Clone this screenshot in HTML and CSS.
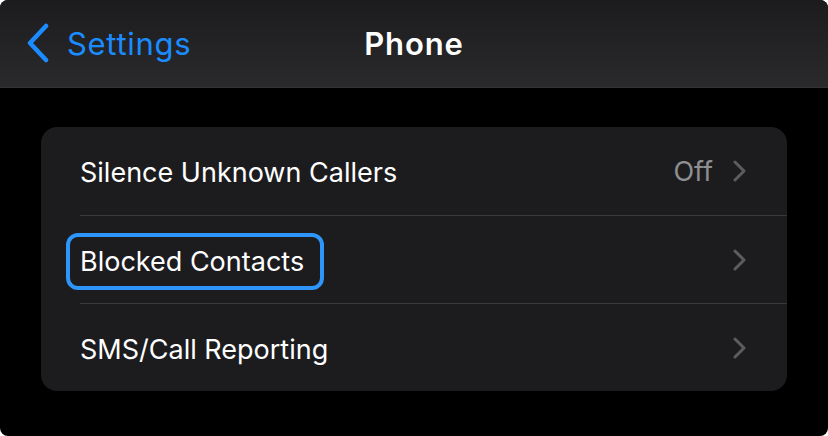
FILE: index.html
```html
<!DOCTYPE html>
<html lang="en">
<head>
<meta charset="UTF-8" />
<title>Phone</title>
<link rel="stylesheet" href="styles.css">
</head>
<body>
<div class="screen">
  <header class="nav-bar">
    <a class="back" href="#">
      <svg class="back-icon" width="24" height="40" viewBox="0 0 24 40">
        <path d="M20 3 L4 20 L20 37" fill="none" stroke="#1a8cff" stroke-width="4.5" stroke-linecap="round" stroke-linejoin="round"/>
      </svg>
      <span>Settings</span>
    </a>
    <h1 class="title">Phone</h1>
  </header>

  <section class="group">
    <div class="row">
      <div class="row-body">
        <span class="label">Silence Unknown Callers</span>
        <span class="detail">
          <span class="value">Off</span>
          <svg class="chevron" width="14" height="22" viewBox="0 0 14 22"><path d="M2 2 L11 11 L2 20" fill="none" stroke="#5c5c60" stroke-width="3" stroke-linecap="round" stroke-linejoin="round"/></svg>
        </span>
      </div>
    </div>
    <div class="row">
      <div class="row-body">
        <span class="label focused">Blocked Contacts</span>
        <span class="detail">
          <svg class="chevron" width="14" height="22" viewBox="0 0 14 22"><path d="M2 2 L11 11 L2 20" fill="none" stroke="#5c5c60" stroke-width="3" stroke-linecap="round" stroke-linejoin="round"/></svg>
        </span>
      </div>
    </div>
    <div class="row">
      <div class="row-body">
        <span class="label">SMS/Call Reporting</span>
        <span class="detail">
          <svg class="chevron" width="14" height="22" viewBox="0 0 14 22"><path d="M2 2 L11 11 L2 20" fill="none" stroke="#5c5c60" stroke-width="3" stroke-linecap="round" stroke-linejoin="round"/></svg>
        </span>
      </div>
    </div>
  </section>
</div>
</body>
</html>
```

FILE: styles.css
```css
body {
  margin: 0;
  background: #fff;
  font-family: Inter, "Noto Sans", sans-serif;
}
.screen {
  width: 828px;
  height: 436px;
  background: #000;
  border-radius: 8px;
  overflow: hidden;
}
.nav-bar {
  height: 88px;
  box-sizing: border-box;
  background: linear-gradient(#1c1c1e, #2a2a2c);
  border-bottom: 1px solid #333336;
  display: grid;
  grid-template-columns: 1fr auto 1fr;
  align-items: center;
}
.back {
  display: flex;
  align-items: center;
  gap: 17px;
  padding-left: 26px;
  color: #1a8cff;
  text-decoration: none;
  font-size: 31px;
  letter-spacing: 0.7px;
  margin-top: -1px;
}
.title {
  margin: 0;
  color: #fff;
  font-size: 31px;
  font-weight: 600;
  letter-spacing: 0.9px;
  margin-top: -1px;
}
.group {
  margin: 39px 41px 0;
  background: #1c1c1e;
  border-radius: 16px;
  overflow: hidden;
}
.row {
  padding-left: 39px;
}
.row-body {
  height: 88px;
  box-sizing: border-box;
  display: flex;
  align-items: center;
  justify-content: space-between;
  padding-top: 3px;
  padding-right: 40px;
}
.row + .row .row-body {
  border-top: 1px solid #3a3a3c;
}
.label {
  color: #fff;
  font-size: 27px;
  line-height: 49px;
  border: 4px solid transparent;
  margin-left: -14px;
  padding: 0 16px 0 10px;
}
.focused {
  border-color: #2e96fa;
  border-radius: 12px;
}
.detail {
  display: flex;
  align-items: center;
  gap: 20px;
  margin-top: -3px;
}
.value {
  color: #8e8e93;
  font-size: 27px;
}
.chevron {
  display: block;
}
```
